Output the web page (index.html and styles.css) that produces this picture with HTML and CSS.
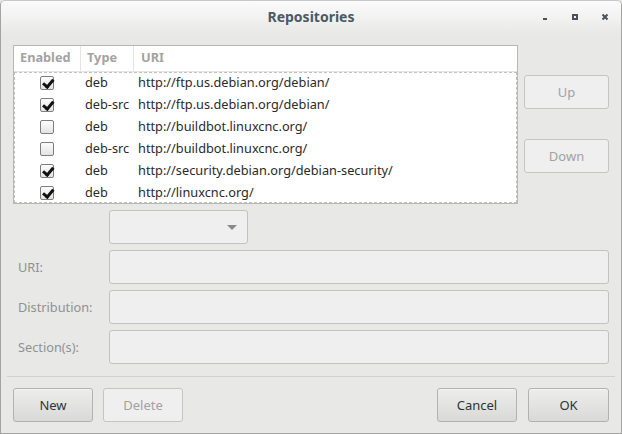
FILE: index.html
```html
<!DOCTYPE html>
<html lang="en">
<head>
    <meta charset="UTF-8">
    <title>Repositories</title>
    <link rel="stylesheet" href="styles.css">
</head>
<body>

<div class="ventana">
    <div class="barra-titulo">
        <div></div>
        <div class="titulo">Repositories</div>
        <div class="controles">
            <svg width="10" height="10" viewBox="0 0 10 10"><rect x="3" y="6" width="4" height="2" fill="#46535c"/></svg>
            <svg width="10" height="10" viewBox="0 0 10 10"><path d="M2 2h6v6H2z M4 4v2h2V4z" fill="#46535c" fill-rule="evenodd"/></svg>
            <svg width="10" height="10" viewBox="0 0 10 10"><path d="M2.5 2.5l5 5M7.5 2.5l-5 5" stroke="#46535c" stroke-width="2"/></svg>
        </div>
    </div>

    <div class="contenido">
        <div class="zona-superior">
            <div class="lista">
                <div class="cabecera">
                    <div class="col-enabled">Enabled</div>
                    <div class="col-type">Type</div>
                    <div class="col-uri">URI</div>
                </div>
                <div class="filas">
                    <div class="fila"><div class="col-enabled"><span class="check marcado"></span></div><div class="col-type">deb</div><div class="col-uri">http://ftp.us.debian.org/debian/</div></div>
                    <div class="fila"><div class="col-enabled"><span class="check marcado"></span></div><div class="col-type">deb-src</div><div class="col-uri">http://ftp.us.debian.org/debian/</div></div>
                    <div class="fila"><div class="col-enabled"><span class="check"></span></div><div class="col-type">deb</div><div class="col-uri">http://buildbot.linuxcnc.org/</div></div>
                    <div class="fila"><div class="col-enabled"><span class="check"></span></div><div class="col-type">deb-src</div><div class="col-uri">http://buildbot.linuxcnc.org/</div></div>
                    <div class="fila"><div class="col-enabled"><span class="check marcado"></span></div><div class="col-type">deb</div><div class="col-uri">http://security.debian.org/debian-security/</div></div>
                    <div class="fila"><div class="col-enabled"><span class="check marcado"></span></div><div class="col-type">deb</div><div class="col-uri">http://linuxcnc.org/</div></div>
                </div>
            </div>
            <div class="lateral">
                <button class="boton" disabled>Up</button>
                <button class="boton" disabled>Down</button>
            </div>
        </div>

        <div class="formulario">
            <div></div>
            <div class="combo"><span class="flecha"></span></div>
            <label>URI:</label>
            <div class="entrada"></div>
            <label>Distribution:</label>
            <div class="entrada"></div>
            <label>Section(s):</label>
            <div class="entrada"></div>
        </div>

        <div class="separador"></div>

        <div class="botonera">
            <button class="boton activo">New</button>
            <button class="boton" disabled>Delete</button>
            <div class="espacio"></div>
            <button class="boton activo">Cancel</button>
            <button class="boton activo">OK</button>
        </div>
    </div>
</div>

</body>
</html>
```

FILE: styles.css
```css
body {
    margin: 0;
    font-family: "Noto Sans", "DejaVu Sans", sans-serif;
    font-size: 12.75px;
    color: #2e3436;
    background: #e8e8e7;
}

.ventana {
    width: 622px;
    height: 434px;
    box-sizing: border-box;
    border: 1px solid #a3a3a1;
    border-top-color: #c8c8c6;
    border-radius: 5px 5px 0 0;
    background: #e8e8e7;
    display: flex;
    flex-direction: column;
    overflow: hidden;
}

.barra-titulo {
    height: 34px;
    flex: none;
    display: grid;
    grid-template-columns: 1fr auto 1fr;
    align-items: center;
    background: linear-gradient(#fbfbfb, #e8e8e7);
}

.titulo {
    font-weight: bold;
    font-size: 14px;
    color: #4c5a64;
    padding-bottom: 4px;
}

.controles {
    display: flex;
    justify-content: flex-end;
    gap: 20px;
    padding-right: 11px;
    padding-bottom: 2px;
}

.contenido {
    padding: 10px 12px 0 12px;
    display: flex;
    flex-direction: column;
}

.zona-superior {
    display: grid;
    grid-template-columns: 505px 85px;
    gap: 6px;
}

.lista {
    height: 159px;
    box-sizing: border-box;
    background: white;
    border: 1px solid #b7b7b4;
}

.cabecera {
    display: flex;
    height: 25px;
    border-bottom: 1px solid #e4e4e3;
    font-weight: bold;
    color: #a3a3a1;
    align-items: center;
}

.cabecera > div {
    height: 100%;
    display: flex;
    align-items: center;
    box-sizing: border-box;
    padding-bottom: 3px;
}

.cabecera .col-enabled {
    padding-left: 6px;
    border-right: 1px solid #e4e4e3;
}

.cabecera .col-type {
    padding-left: 6px;
    border-right: 1px solid #e4e4e3;
}

.cabecera .col-uri {
    padding-left: 7px;
}

.col-enabled {
    width: 67px;
    flex: none;
}

.col-type {
    width: 53px;
    flex: none;
}

.col-uri {
    flex: 1;
}

.filas {
    border: 1px dashed #c0c0be;
    height: 131px;
    box-sizing: border-box;
}

.fila {
    display: flex;
    height: 22px;
    align-items: center;
    color: #2a2a2a;
    padding-bottom: 2px;
    box-sizing: border-box;
}

.fila:first-child {
    margin-top: -1px;
}

.fila .col-enabled {
    display: flex;
    justify-content: center;
    width: 66px;
    margin-left: -1px;
    padding-top: 1px;
}

.fila .col-type {
    padding-left: 5px;
    box-sizing: border-box;
}

.fila .col-uri {
    padding-left: 5px;
}

.check {
    width: 12px;
    height: 12px;
    border: 1px solid #7e7e7c;
    border-radius: 2px;
    background: linear-gradient(#fdfdfd, #e3e3e2);
    position: relative;
}

.check.marcado::after {
    content: "";
    position: absolute;
    left: 3.5px;
    top: 0px;
    width: 3.5px;
    height: 7.5px;
    border: solid #111;
    border-width: 0 3px 3px 0;
    transform: rotate(40deg);
}

.lateral {
    display: flex;
    flex-direction: column;
    gap: 30px;
    padding-top: 30px;
}

.boton {
    height: 34px;
    width: 80px;
    font-family: inherit;
    font-size: 13px;
    border: 1px solid #c5c5c3;
    border-radius: 3px;
    background: #efefef;
    color: #a2a2a0;
    padding: 0;
}

.lateral .boton {
    width: 85px;
}

.boton.activo {
    border-color: #b2b2b0;
    background: linear-gradient(#ededec, #d9d9d8);
    color: #2e3436;
    box-shadow: inset 0 1px 0 #f4f4f4;
}

.formulario {
    display: grid;
    grid-template-columns: 96px 500px;
    grid-auto-rows: 34px;
    row-gap: 6px;
    margin-top: 6px;
}

label {
    padding-left: 5px;
    display: flex;
    align-items: center;
    color: #919191;
}

.combo {
    width: 139px;
    box-sizing: border-box;
    border: 1px solid #c2c2c0;
    border-radius: 3px;
    background: #efefef;
    position: relative;
}

.flecha {
    position: absolute;
    right: 10px;
    top: 14px;
    border-left: 5px solid transparent;
    border-right: 5px solid transparent;
    border-top: 5px solid #8a8a8a;
}

.entrada {
    box-sizing: border-box;
    border: 1px solid #c2c2c0;
    border-radius: 3px;
    background: #efefef;
}

.separador {
    height: 1px;
    background: #d0d0ce;
    margin: 12px -6px 0 -6px;
}

.botonera {
    display: flex;
    gap: 10px;
    margin-top: 11px;
}

.botonera .espacio {
    flex: 1;
}

.botonera .boton:last-child {
    width: 81px;
    margin-left: 1px;
}
```
